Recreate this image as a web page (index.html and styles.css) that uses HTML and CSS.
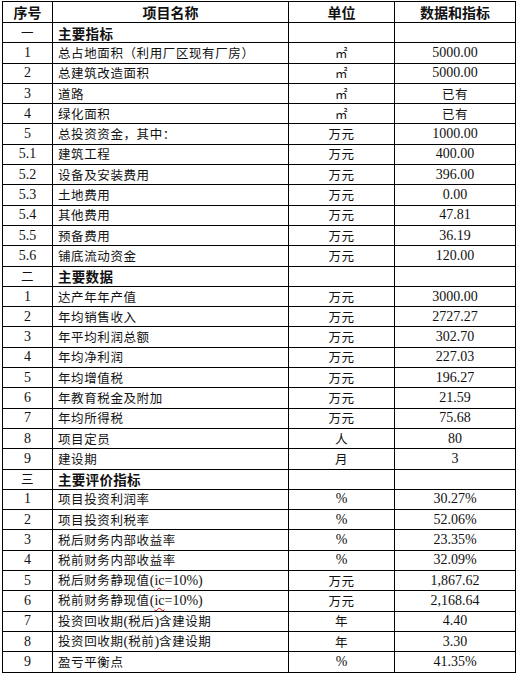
FILE: index.html
```html
<!DOCTYPE html>
<html lang="zh">
<head>
<meta charset="utf-8">
<title>主要指标</title>
<link rel="stylesheet" href="styles.css">
</head>
<body>
<table class="tbl">
<colgroup><col class="c1"><col class="c2"><col class="c3"><col class="c4"></colgroup>
<thead>
<tr class="head"><th>序号</th><th>项目名称</th><th>单位</th><th>数据和指标</th></tr>
</thead>
<tbody>
<tr><td class="no zh">一</td><td class="name sec">主要指标</td><td></td><td></td></tr>
<tr><td class="no">1</td><td class="name">总占地面积（利用厂区现有厂房）</td><td class="unit zh">㎡</td><td class="val">5000.00</td></tr>
<tr><td class="no">2</td><td class="name">总建筑改造面积</td><td class="unit zh">㎡</td><td class="val">5000.00</td></tr>
<tr><td class="no">3</td><td class="name">道路</td><td class="unit zh">㎡</td><td class="val zh">已有</td></tr>
<tr><td class="no">4</td><td class="name">绿化面积</td><td class="unit zh">㎡</td><td class="val zh">已有</td></tr>
<tr><td class="no">5</td><td class="name">总投资资金，其中：</td><td class="unit zh">万元</td><td class="val">1000.00</td></tr>
<tr><td class="no">5.1</td><td class="name">建筑工程</td><td class="unit zh">万元</td><td class="val">400.00</td></tr>
<tr><td class="no">5.2</td><td class="name">设备及安装费用</td><td class="unit zh">万元</td><td class="val">396.00</td></tr>
<tr><td class="no">5.3</td><td class="name">土地费用</td><td class="unit zh">万元</td><td class="val">0.00</td></tr>
<tr><td class="no">5.4</td><td class="name">其他费用</td><td class="unit zh">万元</td><td class="val">47.81</td></tr>
<tr><td class="no">5.5</td><td class="name">预备费用</td><td class="unit zh">万元</td><td class="val">36.19</td></tr>
<tr><td class="no">5.6</td><td class="name">铺底流动资金</td><td class="unit zh">万元</td><td class="val">120.00</td></tr>
<tr><td class="no zh">二</td><td class="name sec">主要数据</td><td></td><td></td></tr>
<tr><td class="no">1</td><td class="name">达产年年产值</td><td class="unit zh">万元</td><td class="val">3000.00</td></tr>
<tr><td class="no">2</td><td class="name">年均销售收入</td><td class="unit zh">万元</td><td class="val">2727.27</td></tr>
<tr><td class="no">3</td><td class="name">年平均利润总额</td><td class="unit zh">万元</td><td class="val">302.70</td></tr>
<tr><td class="no">4</td><td class="name">年均净利润</td><td class="unit zh">万元</td><td class="val">227.03</td></tr>
<tr><td class="no">5</td><td class="name">年均增值税</td><td class="unit zh">万元</td><td class="val">196.27</td></tr>
<tr><td class="no">6</td><td class="name">年教育税金及附加</td><td class="unit zh">万元</td><td class="val">21.59</td></tr>
<tr><td class="no">7</td><td class="name">年均所得税</td><td class="unit zh">万元</td><td class="val">75.68</td></tr>
<tr><td class="no">8</td><td class="name">项目定员</td><td class="unit zh">人</td><td class="val">80</td></tr>
<tr><td class="no">9</td><td class="name">建设期</td><td class="unit zh">月</td><td class="val">3</td></tr>
<tr><td class="no zh">三</td><td class="name sec">主要评价指标</td><td></td><td></td></tr>
<tr><td class="no">1</td><td class="name">项目投资利润率</td><td class="unit">%</td><td class="val">30.27%</td></tr>
<tr><td class="no">2</td><td class="name">项目投资利税率</td><td class="unit">%</td><td class="val">52.06%</td></tr>
<tr><td class="no">3</td><td class="name">税后财务内部收益率</td><td class="unit">%</td><td class="val">23.35%</td></tr>
<tr><td class="no">4</td><td class="name">税前财务内部收益率</td><td class="unit">%</td><td class="val">32.09%</td></tr>
<tr><td class="no">5</td><td class="name">税后财务静现值<span class="lat">(<span class="spell">ic</span>=10%)</span></td><td class="unit zh">万元</td><td class="val">1,867.62</td></tr>
<tr><td class="no">6</td><td class="name">税前财务静现值<span class="lat">(<span class="spell">ic</span>=10%)</span></td><td class="unit zh">万元</td><td class="val">2,168.64</td></tr>
<tr><td class="no">7</td><td class="name">投资回收期<span class="lat">(</span>税后<span class="lat">)</span>含建设期</td><td class="unit zh">年</td><td class="val">4.40</td></tr>
<tr><td class="no">8</td><td class="name">投资回收期<span class="lat">(</span>税前<span class="lat">)</span>含建设期</td><td class="unit zh">年</td><td class="val">3.30</td></tr>
<tr><td class="no">9</td><td class="name">盈亏平衡点</td><td class="unit">%</td><td class="val">41.35%</td></tr>
</tbody>
</table>
</body>
</html>
```
FILE: styles.css
```css
html, body {
  margin: 0;
  padding: 0;
  background: #fff;
}
body {
  padding: 1px 0 0 2px;
  color: #111;
}
.tbl {
  border-collapse: collapse;
  table-layout: fixed;
  width: 513px;
  font-family: "Liberation Serif", "Noto Sans CJK SC", serif;
  font-size: 14px;
}
.c1 { width: 50px; }
.c2 { width: 236px; }
.c3 { width: 106px; }
.c4 { width: 121px; }
.tbl th, .tbl td {
  border: 1px solid #000;
  padding: 0;
  text-align: center;
  vertical-align: middle;
  line-height: 16px;
  white-space: nowrap;
  overflow: hidden;
}
.tbl tr { height: 20.3px; }
.tbl tr.head { height: 21px; }
.tbl th {
  font-family: "Noto Sans CJK SC", sans-serif;
  font-weight: 700;
  font-size: 14px;
}
.zh {
  font-family: "Noto Sans CJK SC", sans-serif;
  font-size: 12.5px;
  letter-spacing: 0.5px;
}
.tbl td.name {
  text-align: left;
  padding-left: 5px;
  font-family: "Noto Sans CJK SC", sans-serif;
  font-size: 12.5px;
  letter-spacing: 0.6px;
}
.tbl td.sec {
  font-weight: 700;
  font-size: 13.5px;
  letter-spacing: 0.3px;
}
.lat {
  font-family: "Liberation Serif", serif;
  font-size: 14px;
  letter-spacing: 0;
}
.spell {
  text-decoration: underline wavy #d00;
  text-decoration-thickness: 1px;
  text-underline-offset: 2px;
}
.unit.zh { font-size: 12.5px; }
```
